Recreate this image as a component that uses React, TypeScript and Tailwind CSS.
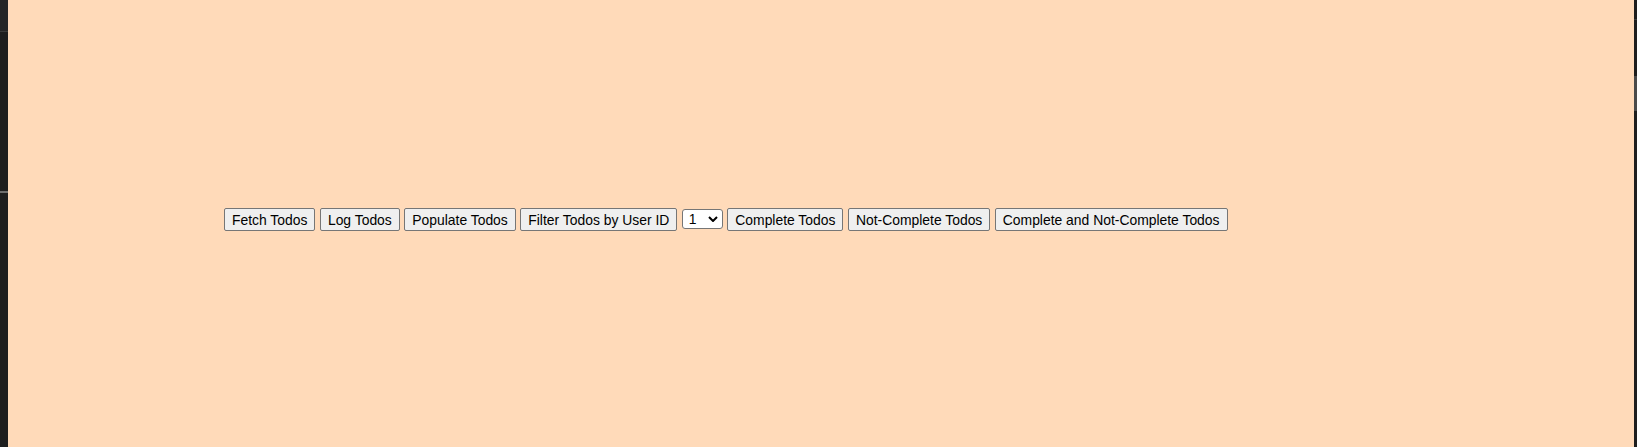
import React from 'react';

const actions = ['Fetch Todos', 'Log Todos', 'Populate Todos', 'Filter Todos by User ID'];
const filters = ['Complete Todos', 'Not-Complete Todos', 'Complete and Not-Complete Todos'];

const btn =
    'h-[23px] px-[7px] border border-[#767676] rounded-[2px] bg-[#efefef] text-black text-[13.9px] leading-[16px] whitespace-nowrap';

const App: React.FC = () => (
    <div className="flex h-[447px] w-full bg-[#ffdab9] font-['Liberation_Sans',Arial,sans-serif]">
        {/* editor gutter on the left */}
        <div className="flex w-[8px] shrink-0 flex-col bg-[#1e1e1e]">
            <div className="h-[31px] bg-[#252526]" />
            <div className="h-px bg-[#3a3a3a]" />
            <div className="mt-[159px] h-[2px] bg-[#6e6e6e]" />
        </div>

        <div className="flex-1 pl-[216px] pt-[208px]">
            <div className="flex items-start gap-[4.5px]">
                {actions.map((a) => (
                    <button key={a} className={btn}>{a}</button>
                ))}
                <div className="relative mt-[1px] h-[20px] w-[41px] shrink-0">
                    <select className="block h-[20px] w-[41px] appearance-none rounded-[3px] border border-[#767676] bg-white pl-[6px] text-[13.9px] leading-[16px] text-black">
                        <option>1</option>
                        <option>2</option>
                        <option>3</option>
                    </select>
                    <svg
                        className="pointer-events-none absolute right-[5px] top-[7px]"
                        width="10"
                        height="6"
                        viewBox="0 0 10 6"
                        fill="none"
                    >
                        <path d="M1 1l4 4 4-4" stroke="#000" strokeWidth="2" />
                    </svg>
                </div>
                {filters.map((f) => (
                    <button key={f} className={btn}>{f}</button>
                ))}
            </div>
        </div>

        {/* scrollbar strip on the right */}
        <div className="flex w-[3px] shrink-0 flex-col bg-[#1e1e1e]">
            <div className="h-[19px]" />
            <div className="h-px bg-[#3c3c3c]" />
            <div className="mt-[56px] h-[35px] bg-[#4a4a4a]" />
        </div>
    </div>
);

export default App;
